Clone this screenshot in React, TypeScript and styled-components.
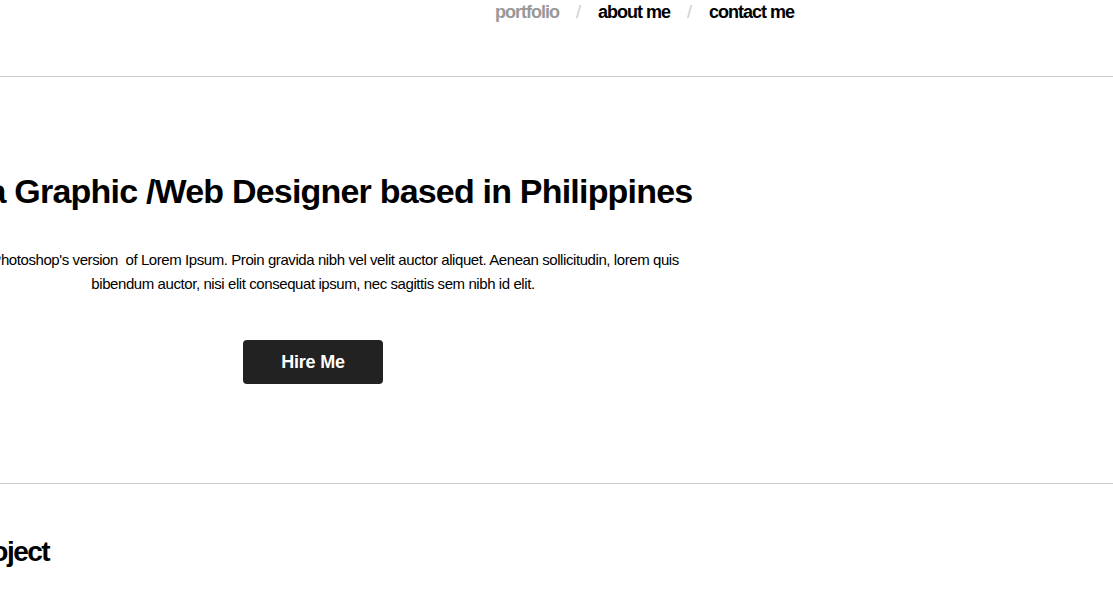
import styled, { createGlobalStyle } from "styled-components";

const GlobalStyle = createGlobalStyle`
    html, body {
        margin: 0;
        padding: 0;
        background: #ffffff;
        overflow-x: hidden;
    }
    body {
        font-family: "Liberation Sans", Arial, Helvetica, sans-serif;
        color: #000000;
    }
`;

const Header = styled.header`
    height: 76px;
    border-bottom: 1px solid #cccccc;
    display: flex;
    justify-content: flex-end;
    align-items: flex-start;
    padding-right: 319px;
`;

const Nav = styled.nav`
    display: flex;
    align-items: center;
    gap: 17px;
    padding-top: 1px;
    line-height: 22px;
`;

const NavLink = styled.a<{ $active?: boolean }>`
    font-size: 18px;
    font-weight: bold;
    letter-spacing: -1px;
    text-decoration: none;
    color: ${(p) => (p.$active ? "#999999" : "#000000")};
`;

const Slash = styled.span`
    font-size: 18px;
    color: #cccccc;
`;

const Hero = styled.section`
    border-bottom: 1px solid #cccccc;
    padding: 94px 0 99px;
`;

const Column = styled.div`
    width: 856px;
    margin-left: -115px;
`;

const HeroInner = styled(Column)`
    display: flex;
    flex-direction: column;
    align-items: center;
    text-align: center;
`;

const Title = styled.h1`
    margin: 0;
    font-size: 34px;
    line-height: 40px;
    font-weight: bold;
    letter-spacing: -0.8px;
    white-space: nowrap;
`;

const Lead = styled.p`
    margin: 37px 0 0;
    font-size: 15px;
    line-height: 24px;
    letter-spacing: -0.42px;
    white-space: nowrap;
`;

const HireButton = styled.button`
    margin-top: 44px;
    width: 140px;
    height: 44px;
    border: none;
    border-radius: 4px;
    background: #222222;
    color: #ffffff;
    font-family: "Liberation Sans", Arial, sans-serif;
    font-size: 18px;
    font-weight: bold;
    letter-spacing: -0.2px;
    cursor: pointer;
`;

const Projects = styled.section`
    padding-top: 51px;
`;

const SectionTitle = styled.h2`
    margin: 0;
    font-size: 28px;
    line-height: 34px;
    font-weight: bold;
    letter-spacing: -1.5px;
    white-space: nowrap;
`;

function App() {
    return (
        <>
            <GlobalStyle />
            <Header>
                <Nav>
                    <NavLink href="#" $active>portfolio</NavLink>
                    <Slash>/</Slash>
                    <NavLink href="#">about me</NavLink>
                    <Slash>/</Slash>
                    <NavLink href="#">contact me</NavLink>
                </Nav>
            </Header>
            <Hero>
                <HeroInner>
                    <Title>I'm a Graphic /Web Designer based in Philippines</Title>
                    <Lead>
                        This is Photoshop's version &nbsp;of Lorem Ipsum. Proin gravida nibh vel velit auctor aliquet. Aenean sollicitudin, lorem quis
                        <br />
                        bibendum auctor, nisi elit consequat ipsum, nec sagittis sem nibh id elit.
                    </Lead>
                    <HireButton>Hire Me</HireButton>
                </HeroInner>
            </Hero>
            <Projects>
                <Column>
                    <SectionTitle>Latest Project</SectionTitle>
                </Column>
            </Projects>
        </>
    );
}

export default App;
